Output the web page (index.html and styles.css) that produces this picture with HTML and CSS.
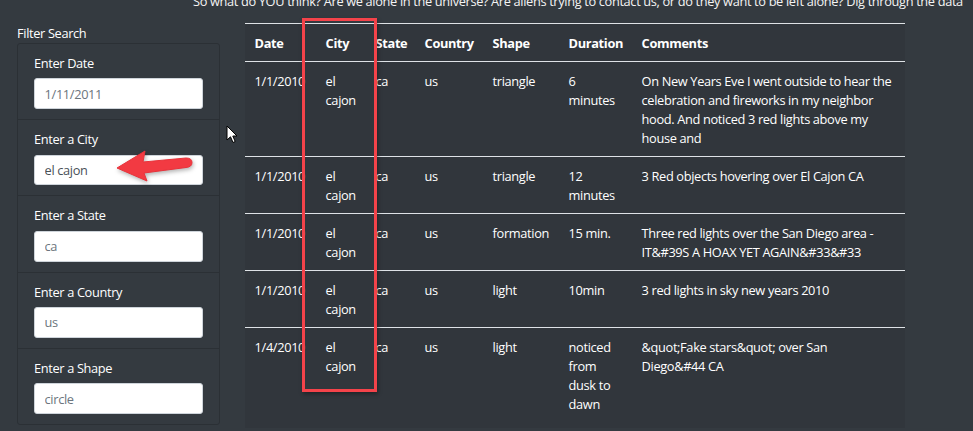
FILE: index.html
```html
<!DOCTYPE html>
<html lang="en">
<head>
<meta charset="utf-8">
<title>UFO Sightings</title>
<link rel="stylesheet" href="styles.css">
</head>
<body>
<div class="page">
  <p class="intro">So what do YOU think? Are we alone in the universe? Are aliens trying to contact us, or do they want to be left alone? Dig through the data</p>
  <div class="main">
    <aside class="filters">
      <div class="filters-title">Filter Search</div>
      <ul class="list">
        <li class="item"><label class="lbl">Enter Date</label><input class="field" type="text" placeholder="1/11/2011"></li>
        <li class="item"><label class="lbl">Enter a City</label><input class="field" type="text" value="el cajon"></li>
        <li class="item"><label class="lbl">Enter a State</label><input class="field" type="text" placeholder="ca"></li>
        <li class="item"><label class="lbl">Enter a Country</label><input class="field" type="text" placeholder="us"></li>
        <li class="item"><label class="lbl">Enter a Shape</label><input class="field" type="text" placeholder="circle"></li>
      </ul>
    </aside>
    <div class="table-wrap">
      <table class="data">
        <colgroup>
          <col class="c-date"><col class="c-city"><col class="c-state"><col class="c-country"><col class="c-shape"><col class="c-dur"><col class="c-com">
        </colgroup>
        <thead>
          <tr><th>Date</th><th>City</th><th>State</th><th>Country</th><th>Shape</th><th>Duration</th><th>Comments</th></tr>
        </thead>
        <tbody>
          <tr><td>1/1/2010</td><td>el cajon</td><td>ca</td><td>us</td><td>triangle</td><td>6 minutes</td><td>On New Years Eve I went outside to hear the celebration and fireworks in my neighbor hood. And noticed 3 red lights above my house and</td></tr>
          <tr><td>1/1/2010</td><td>el cajon</td><td>ca</td><td>us</td><td>triangle</td><td>12 minutes</td><td>3 Red objects hovering over El Cajon CA</td></tr>
          <tr><td>1/1/2010</td><td>el cajon</td><td>ca</td><td>us</td><td>formation</td><td>15 min.</td><td>Three red lights over the San Diego area - IT&amp;#39S A HOAX YET AGAIN&amp;#33&amp;#33</td></tr>
          <tr><td>1/1/2010</td><td>el cajon</td><td>ca</td><td>us</td><td>light</td><td>10min</td><td>3 red lights in sky new years 2010</td></tr>
          <tr><td>1/4/2010</td><td>el cajon</td><td>ca</td><td>us</td><td>light</td><td>noticed from dusk to dawn</td><td>&amp;quot;Fake stars&amp;quot; over San<br>Diego&amp;#44 CA</td></tr>
        </tbody>
      </table>
    </div>
  </div>

  <div class="highlight-box"></div>
  <svg class="arrow" width="90" height="50" viewBox="0 0 90 50">
    <path d="M3 20 L31 3 L29 14 L72 10 Q78 10 78 14.5 Q78 19 72 19.5 L30 25 L33 33 Z" fill="#f23a42" stroke="#e8323a" stroke-width="1" stroke-linejoin="round"/>
  </svg>
  <svg class="cursor" width="14" height="20" viewBox="0 0 14 20">
    <path d="M1 1 L1 15 L4.5 11.8 L7 17.5 L9.2 16.5 L6.8 11 L11 11 Z" fill="#fff" stroke="#000" stroke-width="1" stroke-linejoin="round"/>
  </svg>
</div>
</body>
</html>
```
FILE: styles.css
```css
* { box-sizing: border-box; }
html, body { margin: 0; padding: 0; }
body {
  background: #343a40;
  color: #fff;
  font-family: "Open Sans", "Noto Sans", "Liberation Sans", sans-serif;
  font-size: 12.8px;
  line-height: 19px;
  letter-spacing: -0.35px;
  overflow: hidden;
  width: 973px;
  height: 431px;
}
.page { position: relative; width: 973px; height: 431px; overflow: hidden; }
.intro {
  margin: -8px 0 0 193px;
  white-space: nowrap;
  color: #f4f4f4;
}
.main {
  display: flex;
  align-items: flex-start;
  gap: 25px;
  padding-left: 17px;
  margin-top: 12px;
}
.filters { width: 203px; }
.filters-title { padding-top: 1px; line-height: 19px; }
.list {
  list-style: none;
  margin: 0;
  padding: 0;
  border: 1px solid #2b3035;
  border-radius: 3px;
}
.item {
  display: flex;
  flex-direction: column;
  padding: 10px 16px 10px 16px;
  border-bottom: 1px solid #2b3035;
}
.item:last-child { border-bottom: none; }
.lbl { margin-bottom: 5.2px; line-height: 19.2px; }
.field {
  width: 169px;
  height: 30.8px;
  border: 1px solid #ced4da;
  border-radius: 3px;
  background: #fff;
  padding: 4.8px 9.6px;
  font-family: inherit;
  font-size: 12.8px;
  letter-spacing: -0.35px;
  color: #495057;
}
.field::placeholder { color: #6c757d; }
.table-wrap {
  width: 660px;
  background: #31363c;
}
.data {
  width: 660px;
  table-layout: fixed;
  border-collapse: collapse;
}
.c-date { width: 71px; }
.c-city { width: 50px; }
.c-state { width: 49px; }
.c-country { width: 68px; }
.c-shape { width: 76px; }
.c-dur { width: 73px; }
.c-com { width: 273px; }
.data th, .data td {
  text-align: left;
  vertical-align: top;
  padding: 10px 2px 8px 9.6px;
  border-top: 1px solid #dee2e6;
}
.data th { font-weight: 700; border-bottom: 1px solid #dee2e6; }
.data td:nth-child(1) { white-space: nowrap; }
.data td:nth-child(2) { padding-right: 12px; }
.data td:nth-child(6) { padding-right: 10px; }
.data td:nth-child(7) { padding-right: 6px; }
.data tbody tr:first-child td { border-top: none; }
.data tbody tr:last-child td { padding-bottom: 14px; }

.highlight-box {
  position: absolute;
  left: 302px;
  top: 18px;
  width: 75px;
  height: 374px;
  border: 3.5px solid #f4434a;
  box-shadow: 1px 2px 4px rgba(0,0,0,0.35);
}
.arrow {
  position: absolute;
  left: 114px;
  top: 148px;
  filter: drop-shadow(1px 2px 2px rgba(0,0,0,0.3));
}
.cursor {
  position: absolute;
  left: 226px;
  top: 125px;
}
```
